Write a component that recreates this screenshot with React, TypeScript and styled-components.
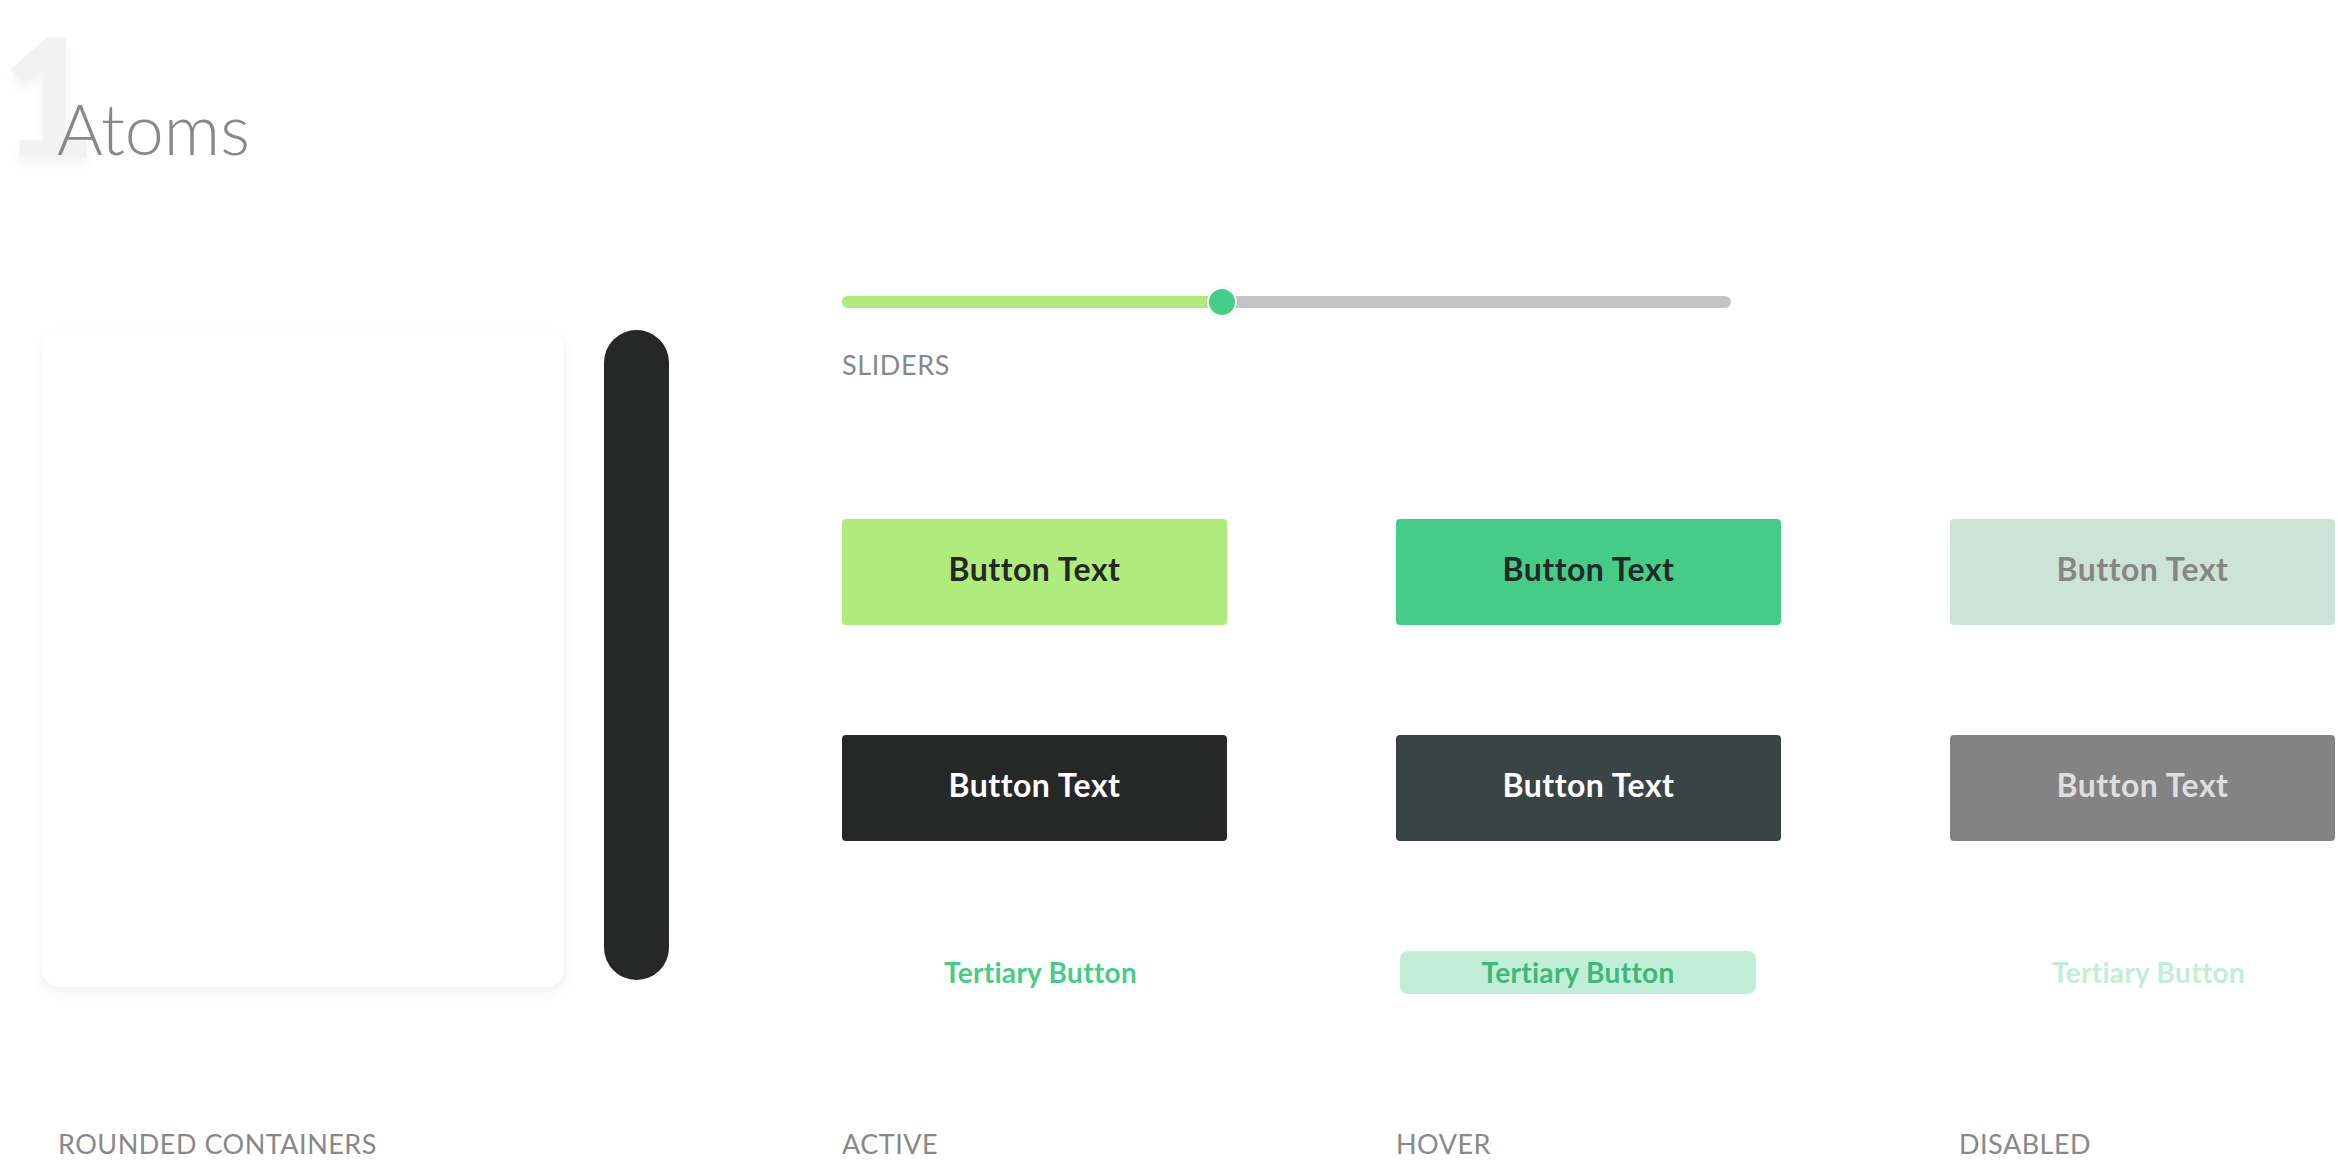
import styled, { createGlobalStyle } from 'styled-components';

const GlobalStyle = createGlobalStyle`
  html, body {
    margin: 0;
    padding: 0;
    background: #ffffff;
  }
  body {
    font-family: 'Lato', 'Liberation Sans', sans-serif;
  }
`;

type Tone = 'primary' | 'secondary';
type State = 'active' | 'hover' | 'disabled';

const solidColors: Record<Tone, Record<State, { bg: string; fg: string }>> = {
  primary: {
    active: { bg: '#b0eb7e', fg: '#262827' },
    hover: { bg: '#45cd87', fg: '#262827' },
    disabled: { bg: '#cce4d8', fg: '#868686' },
  },
  secondary: {
    active: { bg: '#262827', fg: '#ffffff' },
    hover: { bg: '#3b4444', fg: '#ffffff' },
    disabled: { bg: '#838383', fg: '#dedede' },
  },
};

const tertiaryColors: Record<State, { bg: string; fg: string }> = {
  active: { bg: 'transparent', fg: '#45cd87' },
  hover: { bg: '#c0eed7', fg: '#3db878' },
  disabled: { bg: 'transparent', fg: '#c0eed7' },
};

const states: State[] = ['active', 'hover', 'disabled'];

export default function App() {
  const sliderValue = 0.428;

  return (
    <>
      <GlobalStyle />
      <Page>
        <Hero>
          <BigNumber>1</BigNumber>
          <Title>Atoms</Title>
        </Hero>

        <Board>
          <Containers>
            <RoundedCard />
            <Pill />
          </Containers>

          <Controls>
            <Slider>
              <Track>
                <Fill style={{ width: `${sliderValue * 100}%` }} />
              </Track>
              <Thumb style={{ left: `${sliderValue * 100}%` }} />
            </Slider>
            <SectionLabel $top={32}>SLIDERS</SectionLabel>

            <ButtonGrid>
              {states.map((s) => (
                <SolidButton key={`p-${s}`} $bg={solidColors.primary[s].bg} $fg={solidColors.primary[s].fg}>
                  Button Text
                </SolidButton>
              ))}
              {states.map((s) => (
                <SolidButton key={`s-${s}`} $bg={solidColors.secondary[s].bg} $fg={solidColors.secondary[s].fg}>
                  Button Text
                </SolidButton>
              ))}
              {states.map((s) => (
                <TertiaryCell key={`t-${s}`}>
                  <TertiaryButton $bg={tertiaryColors[s].bg} $fg={tertiaryColors[s].fg} $filled={s === 'hover'}>
                    Tertiary Button
                  </TertiaryButton>
                </TertiaryCell>
              ))}
            </ButtonGrid>
          </Controls>
        </Board>

        <Captions>
          <Caption $indent={16}>ROUNDED CONTAINERS</Caption>
          <Caption>ACTIVE</Caption>
          <Caption>HOVER</Caption>
          <Caption $indent={9}>DISABLED</Caption>
        </Captions>
      </Page>
    </>
  );
}

const Page = styled.div`
  position: relative;
  width: 2338px;
  height: 1160px;
  padding-left: 42px;
  box-sizing: border-box;
  overflow: hidden;
`;

const Hero = styled.header`
  position: relative;
  padding-top: 86px;
  padding-left: 15px;
`;

const BigNumber = styled.span`
  position: absolute;
  left: -41px;
  top: 12px;
  font-family: 'Lato', sans-serif;
  font-weight: 900;
  font-size: 164px;
  line-height: 164px;
  color: #f2f2f2;
  text-shadow: 0 8px 12px rgba(0, 0, 0, 0.05);
  user-select: none;
`;

const Title = styled.h1`
  position: relative;
  margin: 0;
  font-family: 'Lato', sans-serif;
  font-weight: 300;
  font-size: 70px;
  line-height: 84px;
  color: #888888;
`;

const Board = styled.main`
  display: flex;
  margin-top: 117px;
`;

const Containers = styled.section`
  display: flex;
  align-items: flex-start;
  gap: 40px;
  width: 800px;
  margin-top: 43px;
`;

const RoundedCard = styled.div`
  width: 522px;
  height: 657px;
  border-radius: 18px;
  background: #ffffff;
  box-shadow: 0 0 2px rgba(0, 0, 0, 0.04), 0 6px 14px rgba(0, 0, 0, 0.06);
`;

const Pill = styled.div`
  width: 65px;
  height: 650px;
  border-radius: 33px;
  background: #262827;
`;

const Controls = styled.section`
  display: flex;
  flex-direction: column;
`;

const Slider = styled.div`
  position: relative;
  width: 889px;
  height: 30px;
  display: flex;
  align-items: center;
`;

const Track = styled.div`
  position: relative;
  width: 100%;
  height: 12px;
  border-radius: 6px;
  background: #c4c4c4;
  overflow: hidden;
`;

const Fill = styled.div`
  height: 100%;
  background: #b0eb7e;
`;

const Thumb = styled.div`
  position: absolute;
  top: 0;
  width: 26px;
  height: 26px;
  margin-left: -15px;
  border-radius: 50%;
  border: 2px solid #ffffff;
  background: #45cd87;
  box-shadow: 0 0 2px rgba(0, 0, 0, 0.12);
`;

const SectionLabel = styled.div<{ $top?: number }>`
  margin-top: ${(p) => p.$top ?? 0}px;
  font-family: 'Lato', sans-serif;
  font-weight: 400;
  font-size: 27px;
  line-height: 32px;
  letter-spacing: 0.6px;
  color: #888888;
`;

const ButtonGrid = styled.div`
  display: grid;
  grid-template-columns: repeat(3, 385px);
  grid-auto-rows: auto;
  column-gap: 169px;
  row-gap: 110px;
  margin-top: 138px;
`;

const SolidButton = styled.button<{ $bg: string; $fg: string }>`
  height: 106px;
  padding: 0 0 7px;
  border: none;
  border-radius: 4px;
  background: ${(p) => p.$bg};
  color: ${(p) => p.$fg};
  font-family: 'Lato', sans-serif;
  font-weight: 700;
  font-size: 32px;
  letter-spacing: 0.5px;
  cursor: pointer;
`;

const TertiaryCell = styled.div`
  display: flex;
  justify-content: center;
`;

const TertiaryButton = styled.button<{ $bg: string; $fg: string; $filled: boolean }>`
  width: ${(p) => (p.$filled ? '356px' : 'auto')};
  height: 43px;
  margin-right: ${(p) => (p.$filled ? '21px' : '-12px')};
  padding: 0 0 2px;
  border: none;
  border-radius: 8px;
  background: ${(p) => p.$bg};
  color: ${(p) => p.$fg};
  font-family: 'Lato', sans-serif;
  font-weight: 700;
  font-size: 28px;
  letter-spacing: 0.3px;
  cursor: pointer;
`;

const Captions = styled.footer`
  display: grid;
  grid-template-columns: 631px repeat(3, 385px);
  column-gap: 169px;
  margin-top: 134px;
`;

const Caption = styled.div<{ $indent?: number }>`
  padding-left: ${(p) => p.$indent ?? 0}px;
  font-family: 'Lato', sans-serif;
  font-weight: 400;
  font-size: 27px;
  line-height: 32px;
  letter-spacing: 0.5px;
  color: #888888;
  white-space: nowrap;
`;
